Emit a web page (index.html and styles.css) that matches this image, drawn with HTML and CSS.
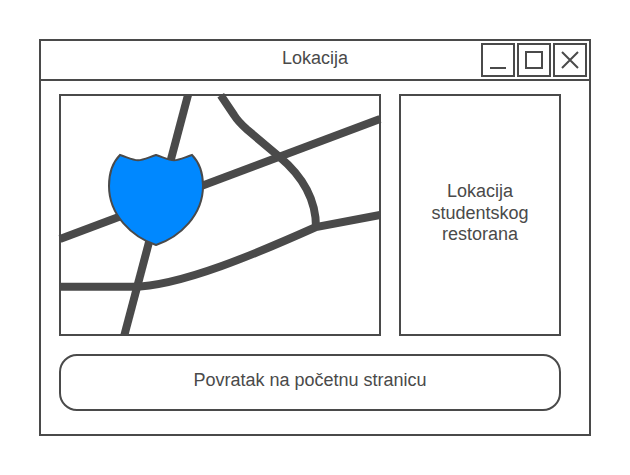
FILE: index.html
```html
<!DOCTYPE html>
<html lang="hr">
<head>
<meta charset="utf-8">
<title>Lokacija</title>
<link rel="stylesheet" href="styles.css">
</head>
<body>
<main class="window">
  <header class="titlebar">
    <h1 class="title">Lokacija</h1>
    <div class="controls">
      <button class="control" aria-label="Minimiziraj"><svg viewBox="0 0 34 34"><path d="M9 25H25"/></svg></button>
      <button class="control" aria-label="Maksimiziraj"><svg viewBox="0 0 34 34"><path d="M9 9H25V25H9Z"/></svg></button>
      <button class="control" aria-label="Zatvori"><svg viewBox="0 0 34 34"><path d="M9 9L25 25M25 9L9 25"/></svg></button>
    </div>
  </header>
  <div class="content">
    <div class="panels">
      <svg class="map" viewBox="59 94 322 242">
        <rect class="frame" x="60" y="95" width="320" height="240"/>
        <g class="roads">
          <path d="M188 95L124.400 335"/>
          <path d="M60 239L380 119"/>
          <path d="M60 286.800H132C180 286.800 260 252 316 227L380 215"/>
          <path d="M220.700 95.200L234 115Q238 121.500 247 129.500L279 156.500C300 174 316 198 316 227"/>
        </g>
        <path class="shield" d="M120 155C130 158.500 133 160.300 138 160.300S146 158.500 156 155C166 158.500 169 160.300 174 160.300S182 158.500 192 155C200 163 203 173 203 186C203 215 180 237 156 245C132 237 109 215 109 186C109 173 112 163 120 155Z"/>
      </svg>
      <section class="place">Lokacija<br>studentskog<br>restorana</section>
    </div>
    <button class="back">Povratak na početnu stranicu</button>
  </div>
</main>
</body>
</html>
```
FILE: styles.css
```css
* {
  box-sizing: border-box;
}

body {
  margin: 0;
  padding: 39px;
  background: #fff;
  color: #4a4a4a;
  font: 18px/21.5px "Liberation Sans", Arial, sans-serif;
}

.window {
  width: 552px;
  height: 397px;
  border: 2px solid #4a4a4a;
}

.titlebar {
  display: grid;
  grid-template-columns: 1fr auto;
  height: 40px;
  border-bottom: 2px solid #4a4a4a;
}

.title {
  grid-area: 1 / 1 / 2 / 3;
  margin: 0;
  padding-top: 7px;
  font: inherit;
  text-align: center;
}

.controls {
  grid-area: 1 / 2;
  display: flex;
  gap: 2px;
  padding: 2px;
}

.control {
  width: 34px;
  height: 34px;
  padding: 0;
  border: 2px solid #4a4a4a;
  background: #fff;
}

.control svg {
  display: block;
  width: 34px;
  height: 34px;
  margin: -2px;
  fill: none;
  stroke: #4a4a4a;
  stroke-width: 2;
}

.content {
  display: flex;
  flex-direction: column;
  gap: 18px;
  padding: 13px 28px 0 18px;
}

.panels {
  display: flex;
  gap: 18px;
}

.map {
  display: block;
  width: 322px;
  height: 242px;
  overflow: visible;
}

.frame {
  fill: #fff;
  stroke: #4a4a4a;
  stroke-width: 2;
}

.roads {
  fill: none;
  stroke: #4a4a4a;
  stroke-width: 8;
}

.shield {
  fill: #08f;
  stroke: #4a4a4a;
  stroke-width: 2;
}

.place {
  display: flex;
  align-items: center;
  justify-content: center;
  width: 162px;
  padding-bottom: 3px;
  border: 2px solid #4a4a4a;
  text-align: center;
}

.back {
  height: 57px;
  padding: 0 0 3px;
  border: 2px solid #4a4a4a;
  border-radius: 18px;
  background: #fff;
  color: inherit;
  font: inherit;
}
```
